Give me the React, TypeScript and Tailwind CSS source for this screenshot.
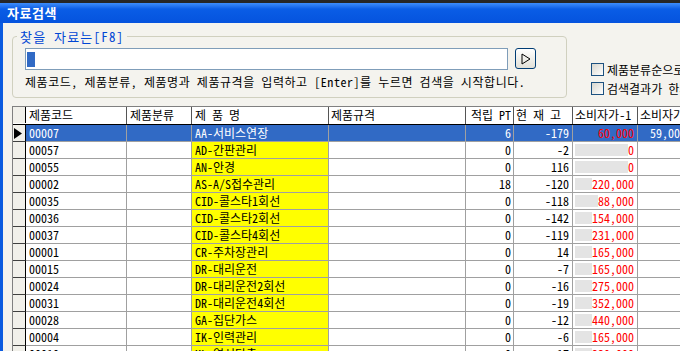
const FONT = "font-['Noto_Sans_Mono_CJK_KR','Noto_Sans_CJK_KR',sans-serif]";

interface Row {
  code: string;
  name: string;
  pt: string;
  stock: string;
  price: string;
  price2?: string;
}

const rows: Row[] = [
  { code: '00007', name: 'AA-서비스연장', pt: '6', stock: '-179', price: '60,000', price2: '59,000' },
  { code: '00057', name: 'AD-간판관리', pt: '0', stock: '-2', price: '0' },
  { code: '00055', name: 'AN-안경', pt: '0', stock: '116', price: '0' },
  { code: '00002', name: 'AS-A/S접수관리', pt: '18', stock: '-120', price: '220,000' },
  { code: '00035', name: 'CID-콜스타1회선', pt: '0', stock: '-118', price: '88,000' },
  { code: '00036', name: 'CID-콜스타2회선', pt: '0', stock: '-142', price: '154,000' },
  { code: '00037', name: 'CID-콜스타4회선', pt: '0', stock: '-119', price: '231,000' },
  { code: '00001', name: 'CR-주차장관리', pt: '0', stock: '14', price: '165,000' },
  { code: '00015', name: 'DR-대리운전', pt: '0', stock: '-7', price: '165,000' },
  { code: '00024', name: 'DR-대리운전2회선', pt: '0', stock: '-16', price: '275,000' },
  { code: '00031', name: 'DR-대리운전4회선', pt: '0', stock: '-19', price: '352,000' },
  { code: '00028', name: 'GA-집단가스', pt: '0', stock: '-12', price: '440,000' },
  { code: '00004', name: 'IK-인력관리', pt: '0', stock: '-6', price: '165,000' },
  { code: '00010', name: 'ML-열선탐촉', pt: '0', stock: '-17', price: '330,000' },
];

const COLS = 'grid grid-cols-[13px_101px_65px_137px_137px_48px_59px_65px_52px]';

function Checkbox({ label }: { label: string }) {
  return (
    <div className="flex items-center gap-[3px] whitespace-nowrap h-[13px]">
      <div className="w-[13px] h-[13px] shrink-0 border border-[#1c5180] bg-gradient-to-br from-[#d8d7cf] to-white" />
      <span className="leading-[13px]">{label}</span>
    </div>
  );
}

function GridRow({ row, selected }: { row: Row; selected: boolean }) {
  const cell = 'h-[17px] border-r border-b border-[#a0a0a0] leading-[16px] overflow-hidden whitespace-nowrap';
  const fg = selected ? 'text-white' : 'text-black';
  const sel = selected ? 'bg-[#316ac5]' : '';
  return (
    <div className={COLS}>
      {/* row indicator */}
      <div className="h-[17px] border-r border-b border-r-black border-b-[#404040] bg-[#f1f0ea] flex items-center pl-[1px]">
        {selected && (
          <svg width="8" height="11" viewBox="0 0 8 11">
            <polygon points="0,0 8,5.5 0,11" fill="black" />
          </svg>
        )}
      </div>
      <div className={`${cell} ${fg} pl-[3px] ${sel}`}>{row.code}</div>
      <div className={`${cell} ${sel}`} />
      <div className={`${cell} ${fg} pl-[3px] ${selected ? 'bg-[#316ac5]' : 'bg-[#ffff00]'}`}>{row.name}</div>
      <div className={`${cell} ${sel}`} />
      <div className={`${cell} ${fg} text-right pr-[2px] ${sel}`}>{row.pt}</div>
      <div className={`${cell} ${fg} text-right pr-[3px] ${sel}`}>{row.stock}</div>
      {selected ? (
        <div className={`${cell} bg-[#316ac5] text-[#ff0000] text-right pr-[3px]`}>{row.price}</div>
      ) : (
        <div className={`${cell} flex items-stretch pl-[2px] pr-[3px] py-[2px]`}>
          <div className="flex-1 bg-[#e4e4e4]" />
          <span className="bg-white text-[#ff0000] leading-[12px]">{row.price}</span>
        </div>
      )}
      <div className={`${cell} ${fg} text-right pr-[3px] ${sel}`}>{row.price2 ?? ''}</div>
    </div>
  );
}

export default function App() {
  const head = 'h-[17px] border-r border-[#555] leading-[16px] whitespace-nowrap overflow-hidden';
  return (
    <div className={`w-[680px] h-[351px] overflow-hidden bg-[#f4f3ee] ${FONT} text-[12px] text-black flex flex-col`}>
      <div className="h-[3px] shrink-0 bg-[#262626]" />
      {/* title bar */}
      <div className="h-[20px] shrink-0 flex items-center pl-[7px] bg-gradient-to-b from-[#3d8dfb] via-[#0a5de6] via-30% to-[#0553de] text-white font-bold text-[13px] tracking-[0.5px]">
        자료검색
      </div>

      <div className="flex flex-1 min-h-0">
        <div className="w-[3px] shrink-0 bg-[#0b5be0]" />
        <div className="flex-1 min-w-0 pl-[9px] flex flex-col">
          {/* search area */}
          <div className="flex items-start">
            <fieldset className="w-[555px] mt-[6px] border border-[#d0d0bf] rounded-[4px] pb-[8px] shrink-0">
              <legend className="ml-[4px] px-[3px] text-[#0046d5] text-[13px] leading-[15px] tracking-[1.2px]">
                찾을 자료는[F8]
              </legend>
              <div className="flex items-start pl-[12px] mt-[4px]">
                <div className="w-[483px] h-[22px] border border-[#7f9db9] bg-white flex items-center pl-[1px]">
                  <div className="w-[8px] h-[15px] bg-[#316ac5]" />
                </div>
                <div className="ml-[7px] w-[21px] h-[21px] rounded-[3px] border border-[#003c74] bg-gradient-to-b from-white to-[#e1e0d8] flex items-center justify-center">
                  <svg width="10" height="12" viewBox="0 0 10 12">
                    <polygon points="1,1 9,6 1,11" fill="none" stroke="black" strokeWidth="1" />
                  </svg>
                </div>
              </div>
              <div className="pl-[12px] mt-[4px] leading-[15px] whitespace-nowrap tracking-[0.55px]">
                제품코드, 제품분류, 제품명과 제품규격을 입력하고 [Enter]를 누르면 검색을 시작합니다.
              </div>
            </fieldset>
            <div className="ml-[24px] mt-[40px] flex flex-col gap-[6px]">
              <Checkbox label="제품분류순으로 정렬" />
              <Checkbox label="검색결과가 한개이면 바로 선택" />
            </div>
          </div>

          {/* data grid */}
          <div className="mt-[8px] border-l border-t border-[#808080] bg-white">
            <div className={`${COLS} border-b border-black`}>
              <div className="h-[16px] border-r border-black bg-[#f1f0ea]" />
              <div className={`${head} pl-[3px]`}>제품코드</div>
              <div className={`${head} pl-[3px]`}>제품분류</div>
              <div className={`${head} pl-[3px]`}>제 품 명</div>
              <div className={`${head} pl-[2px]`}>제품규격</div>
              <div className={`${head} text-right pr-[2px]`}>적립 PT</div>
              <div className={`${head} pl-[2px]`}>현 재 고</div>
              <div className={`${head} pl-[2px]`}>소비자가-1</div>
              <div className={`${head} pl-[2px]`}>소비자가-2</div>
            </div>
            {rows.map((r, i) => (
              <GridRow key={r.code} row={r} selected={i === 0} />
            ))}
          </div>
        </div>
      </div>
    </div>
  );
}
